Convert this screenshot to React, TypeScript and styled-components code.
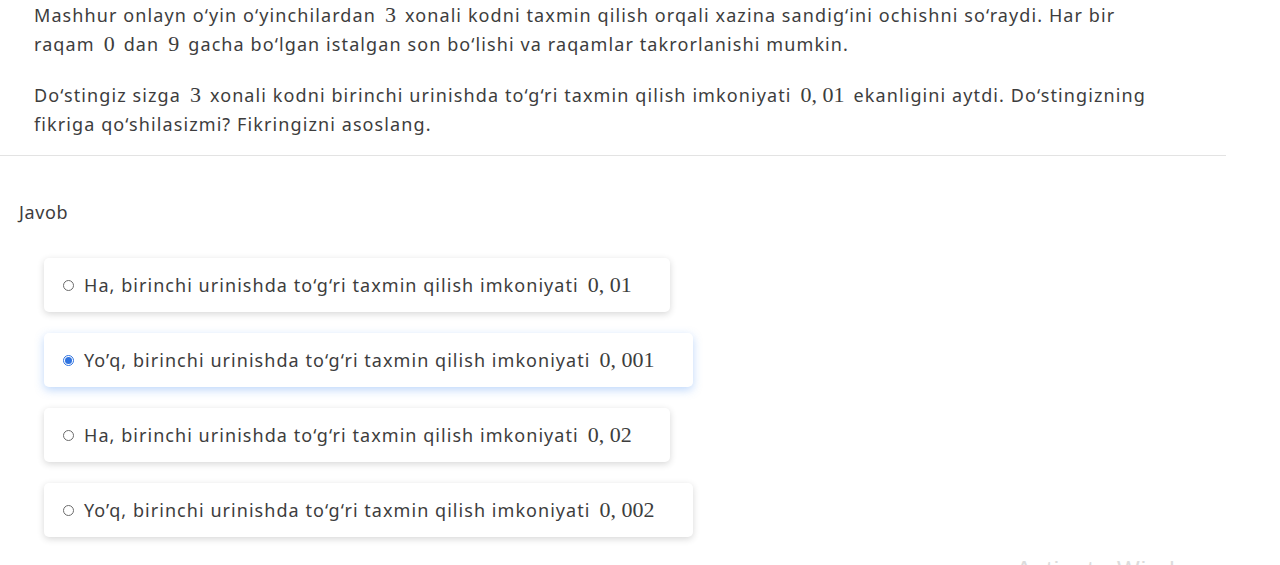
import styled, { createGlobalStyle } from "styled-components";

const GlobalStyle = createGlobalStyle`
  html, body {
    margin: 0;
    padding: 0;
    background: #ffffff;
  }
  body {
    font-family: "Noto Sans", "Open Sans", sans-serif;
    color: #3d3d3d;
    overflow: hidden;
  }
`;

const Page = styled.div`
  position: relative;
  width: 1280px;
  height: 565px;
  overflow: hidden;
`;

const Question = styled.div`
  width: 1192px;
  padding: 1px 0 16px 34px;
  border-bottom: 1px solid #e3e3e3;
`;

const Para = styled.p`
  margin: 0 0 22px;
  font-size: 18px;
  line-height: 29px;
  letter-spacing: 1.1px;
  white-space: nowrap;

  &:last-child {
    margin-bottom: 0;
  }
`;

const M = styled.span`
  font-family: "Liberation Serif", "Times New Roman", serif;
  font-size: 22px;
  line-height: 0;
  letter-spacing: 0;
  margin: 0 9px;
`;

const Answer = styled.div`
  padding: 44px 0 0 19px;
`;

const Label = styled.div`
  font-size: 18px;
  letter-spacing: 0.6px;
  line-height: 24px;
  margin-bottom: 34px;
`;

const Options = styled.div`
  display: flex;
  flex-direction: column;
  align-items: flex-start;
  gap: 21px;
  padding-left: 25px;
`;

const Card = styled.label<{ $active?: boolean }>`
  display: flex;
  align-items: center;
  gap: 10px;
  height: 54px;
  box-sizing: border-box;
  padding: 0 29px 0 19px;
  border-radius: 5px;
  background: #fff;
  font-size: 18px;
  letter-spacing: 1.05px;
  white-space: nowrap;
  cursor: pointer;
  box-shadow: ${(p) =>
    p.$active
      ? "0 3px 10px rgba(70, 140, 240, 0.35)"
      : "0 2px 7px rgba(0, 0, 0, 0.16)"};
`;

const Radio = styled.span<{ $checked?: boolean }>`
  width: 11px;
  height: 11px;
  border-radius: 50%;
  box-sizing: border-box;
  border: 1px solid ${(p) => (p.$checked ? "#2f73e0" : "#6b6b6b")};
  display: flex;
  align-items: center;
  justify-content: center;
  flex: none;

  &::after {
    content: "";
    width: 7px;
    height: 7px;
    border-radius: 50%;
    background: ${(p) => (p.$checked ? "#2f73e0" : "transparent")};
  }
`;

const Watermark = styled.div`
  position: absolute;
  left: 1016px;
  top: 556px;
  font-family: "Liberation Sans", sans-serif;
  font-size: 24px;
  color: #dcdcdc;
  letter-spacing: 1px;
`;

const options = [
  { lead: "Ha", value: "0, 01" },
  { lead: "Yo\u2019q", value: "0, 001", checked: true },
  { lead: "Ha", value: "0, 02" },
  { lead: "Yo\u2019q", value: "0, 002" },
];

export default function App() {
  return (
    <Page>
      <GlobalStyle />
      <Question>
        <Para>
          Mashhur onlayn o‘yin o‘yinchilardan<M>3</M>xonali kodni taxmin qilish
          orqali xazina sandig‘ini ochishni so‘raydi. Har bir
          <br />
          raqam<M>0</M>dan<M>9</M>gacha bo‘lgan istalgan son bo‘lishi va
          raqamlar takrorlanishi mumkin.
        </Para>
        <Para>
          Do‘stingiz sizga<M>3</M>xonali kodni birinchi urinishda to‘g‘ri taxmin
          qilish imkoniyati<M>0, 01</M>ekanligini aytdi. Do‘stingizning
          <br />
          fikriga qo‘shilasizmi? Fikringizni asoslang.
        </Para>
      </Question>
      <Answer>
        <Label>Javob</Label>
        <Options>
          {options.map((o, i) => (
            <Card key={i} $active={o.checked}>
              <Radio $checked={o.checked} />
              <span>
                {o.lead}, birinchi urinishda to‘g‘ri taxmin qilish imkoniyati
                <M>{o.value}</M>
              </span>
            </Card>
          ))}
        </Options>
      </Answer>
      <Watermark>Activate Windows</Watermark>
    </Page>
  );
}
